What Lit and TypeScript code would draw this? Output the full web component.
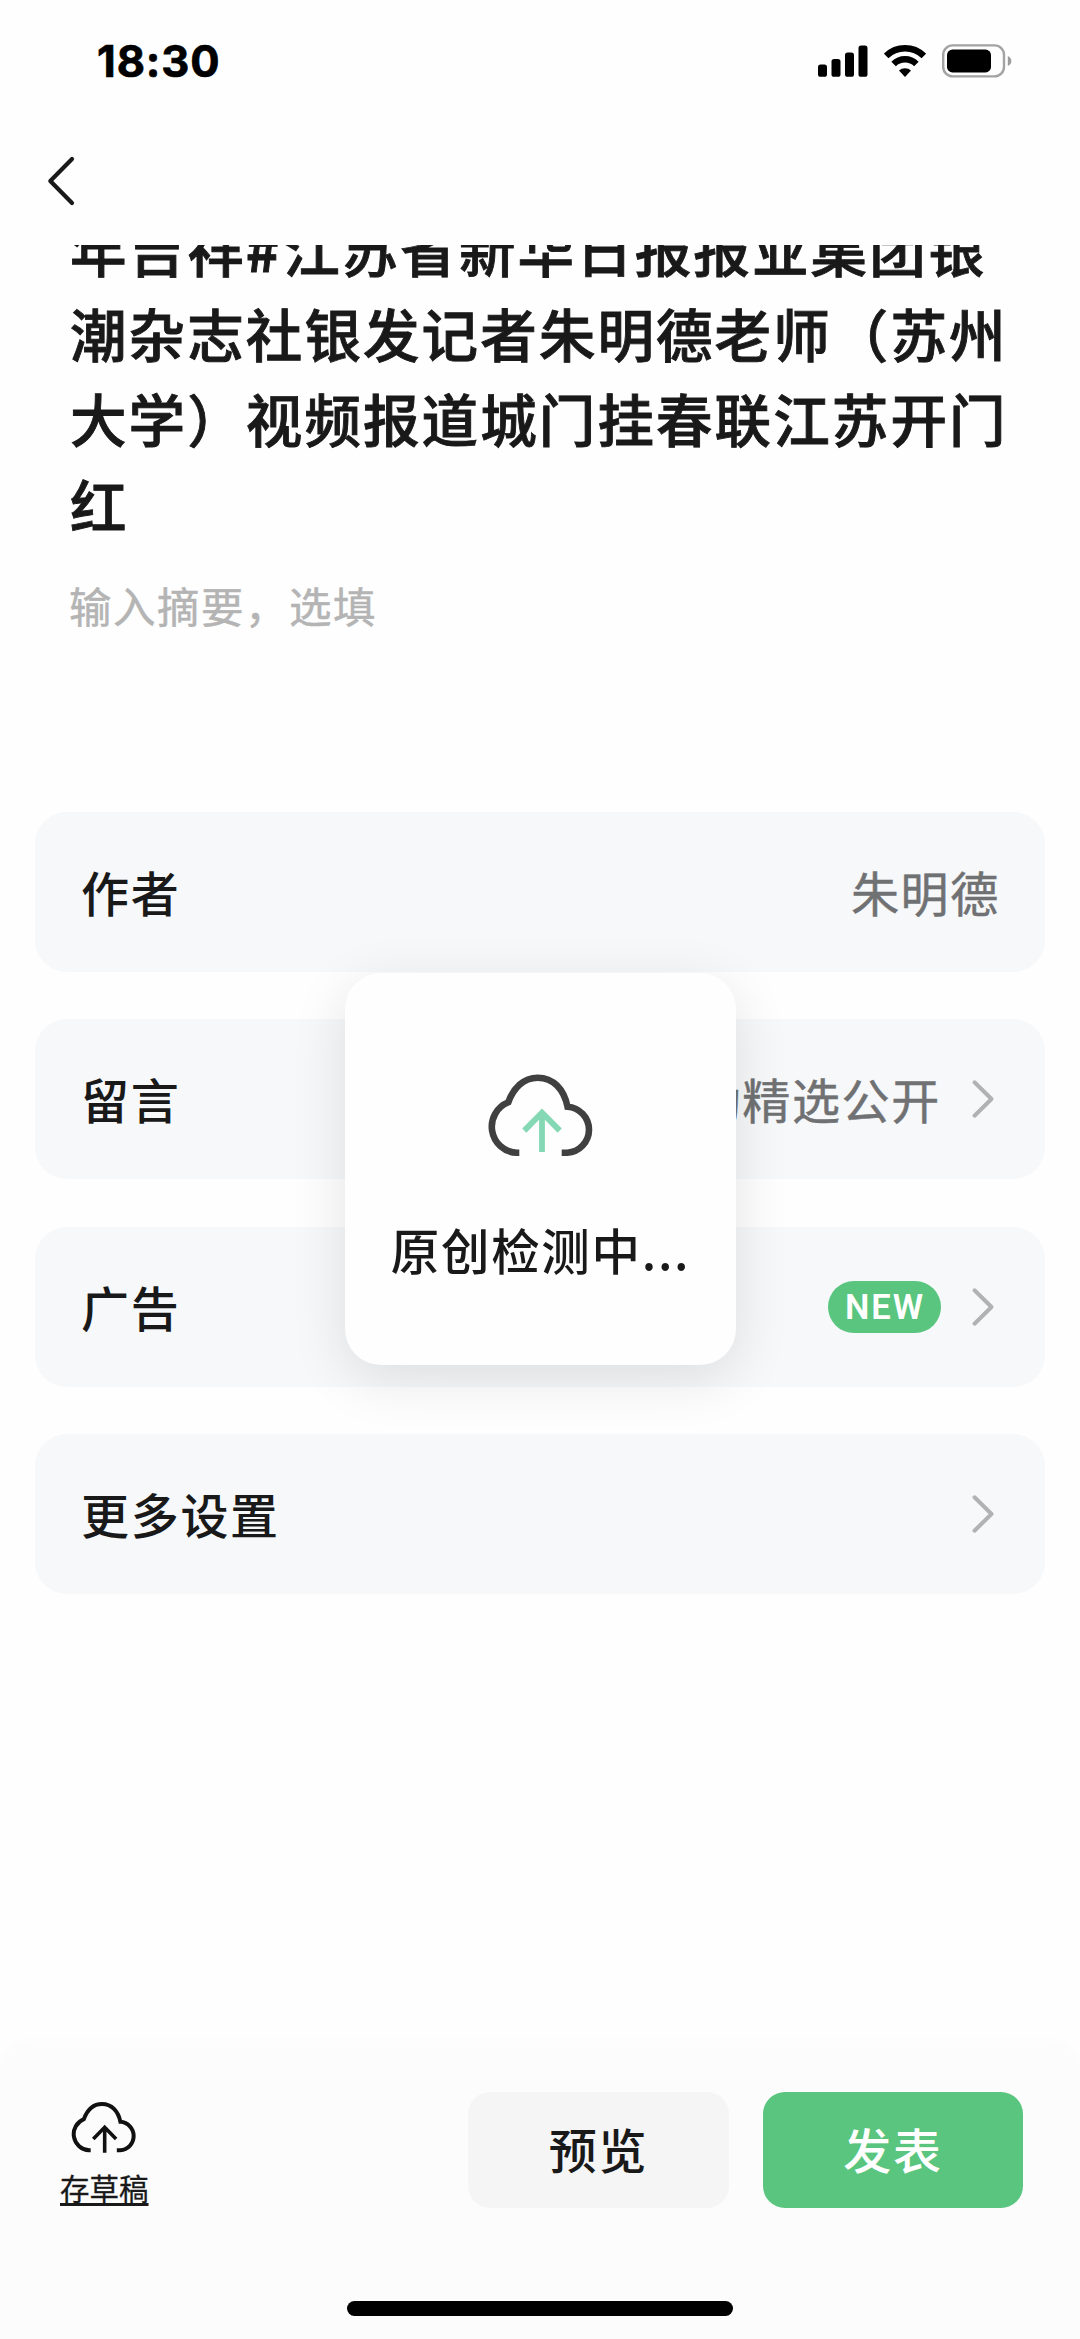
import { LitElement, html, css, svg, nothing } from "lit";
import { customElement, property } from "lit/decorators.js";

const cloudOutline = svg`<path d="M39.3 82.8H36.7A26.2 26.2 0 0 1 28.3 32.3C33.3 18.3 43.3 7.7 57.7 7.7C73.3 7.7 84 19.3 87.5 36.7A23.1 23.1 0 0 1 87.3 82.8H81.7"/>`;

@customElement("status-bar")
class StatusBar extends LitElement {
  static styles = css`
    :host { display: block; }
    .bar {
      display: flex; justify-content: space-between; align-items: center;
      height: 122px; padding: 0 68px 0 97px; box-sizing: border-box;
      color: #000;
    }
    .time { font: 700 43.5px/50px Inter, sans-serif; letter-spacing: 0.9px; -webkit-text-stroke: 0.7px #000; }
    .icons { display: flex; align-items: center; gap: 16px; }
    svg { display: block; }
  `;
  render() {
    return html`
      <div class="bar">
        <div class="time">18:30</div>
        <div class="icons">
          <svg width="50" height="34" viewBox="0 0 50 34">
            <rect x="0" y="20.5" width="9" height="12.3" rx="2.6"/>
            <rect x="13.5" y="15" width="9" height="17.8" rx="2.6"/>
            <rect x="27" y="8.5" width="9" height="24.3" rx="2.6"/>
            <rect x="40.5" y="1.5" width="9" height="31.3" rx="2.6"/>
          </svg>
          <svg width="42" height="34" viewBox="0 0 42 34">
            <g fill="none" stroke="#000" stroke-width="6.4">
              <path d="M2.2 11.9A27 27 0 0 1 39.8 11.9"/>
              <path d="M9.6 20A16.2 16.2 0 0 1 32.4 20"/>
            </g>
            <path d="M15 26.6A8.8 8.8 0 0 1 27 26.6L21 32.9Z"/>
          </svg>
          <svg width="70" height="34" viewBox="0 0 70 34">
            <rect x="1.2" y="1.4" width="60.8" height="31" rx="9.5" fill="none" stroke="#a3a3a3" stroke-width="2.4"/>
            <rect x="5" y="5.6" width="44" height="22.8" rx="5.5"/>
            <path d="M65.8 12V22C68.4 21 69.3 19 69.3 17S68.4 13 65.8 12Z" fill="#9c9c9c"/>
          </svg>
        </div>
      </div>
    `;
  }
}

@customElement("setting-row")
class SettingRow extends LitElement {
  @property() label = "";
  @property() value = "";
  @property() badge = "";
  @property({ type: Boolean }) arrow = false;

  static styles = css`
    :host { display: block; }
    .row {
      display: flex; align-items: center; justify-content: space-between;
      height: 160px; padding: 0 45px 0 46px; box-sizing: border-box;
      background: #f6f8fa; border-radius: 32px;
      font-size: 48px; line-height: 70px; letter-spacing: 1.7px;
    }
    .label { color: #191919; font-weight: 500; padding-bottom: 2px; }
    .end { display: flex; align-items: center; gap: 30px; }
    .value { color: #707173; -webkit-text-stroke: 0.5px #707173; padding-bottom: 2px; }
    .badge {
      width: 113px; height: 52px; border-radius: 26px; background: #5ac57e; color: #fff;
      font: 600 34.5px/53px Roboto, sans-serif; letter-spacing: 2px; text-align: center; text-indent: 1px;
    }
    .arrow { display: block; margin-right: 5px; }
  `;
  render() {
    return html`
      <div class="row">
        <span class="label">${this.label}</span>
        <span class="end">
          ${this.value ? html`<span class="value">${this.value}</span>` : nothing}
          ${this.badge ? html`<span class="badge">${this.badge}</span>` : nothing}
          ${this.arrow
            ? html`<svg class="arrow" width="24" height="40" viewBox="0 0 24 40" fill="none" stroke="#b1b2b3"
                stroke-width="4" stroke-linecap="round" stroke-linejoin="round"><path d="M3.5 3.3L20.5 20L3.5 36.7"/></svg>`
            : nothing}
        </span>
      </div>
    `;
  }
}

@customElement("app-root")
class AppRoot extends LitElement {
  static styles = css`
    :host {
      display: block; height: 2339px; width: 1080px; overflow: hidden; position: relative;
      background: #fefefe; color: #191919;
      font-family: "Noto Sans CJK SC", sans-serif;
    }
    .page { display: flex; flex-direction: column; height: 100%; }
    .nav { display: flex; align-items: center; height: 123px; padding-left: 46px; }
    .nav svg { display: block; margin-bottom: 5px; }
    .content { flex: 1; overflow: hidden; }
    .title {
      margin: -40px 0 0; padding-left: 70px; white-space: nowrap;
      font-size: 56.5px; font-weight: 500; line-height: 85.2px; letter-spacing: 2.1px;
      -webkit-text-stroke: 0.9px #191919;
    }
    .title div { height: 85.2px; }
    .hash { font-weight: 700; letter-spacing: 4px; }
    .summary {
      padding: 27px 0 0 69px; color: #b4b4b4;
      font-size: 42.5px; line-height: 64px; letter-spacing: 1.5px;
      -webkit-text-stroke: 0.5px #b4b4b4;
    }
    .list { display: flex; flex-direction: column; gap: 47.4px; padding: 175px 35px 0; }
    .footer {
      display: flex; flex-direction: column; justify-content: space-between; align-items: center;
      height: 296px; background: #fcfcfc; border-radius: 30px 30px 0 0;
      box-shadow: 0 0 14px rgba(0, 0, 0, 0.02);
    }
    .actions {
      display: flex; align-items: flex-start; width: 100%; box-sizing: border-box;
      padding: 49px 57px 0 60px;
    }
    .draft { display: flex; flex-direction: column; align-items: center; padding-top: 9px; margin-right: auto; }
    .draft svg { display: block; }
    .draft span {
      margin-top: 10px; font-size: 29.5px; line-height: 44px;
      text-decoration: underline; text-decoration-thickness: 2.6px;
      text-underline-offset: 3px; text-decoration-skip-ink: none;
      -webkit-text-stroke: 0.3px #191919;
    }
    .btn {
      width: 261px; height: 116px; border-radius: 22px; background: #f5f5f5;
      font-size: 48px; font-weight: 500; line-height: 113px; letter-spacing: 1.8px; text-align: center;
    }
    .primary { margin-left: 34px; width: 260px; background: #5ac57e; color: #fff; }
    .home { width: 386px; height: 15px; border-radius: 8px; background: #000; margin-bottom: 23px; }
    .toast {
      position: absolute; left: 345px; top: 973px; width: 391px; height: 392px; box-sizing: border-box;
      display: flex; flex-direction: column; align-items: center; padding-top: 97px;
      background: #fefefe; border-radius: 36px; box-shadow: 0 14px 56px rgba(0, 0, 0, 0.11);
    }
    .toast svg { display: block; margin-left: 3px; }
    .toast span {
      margin-top: 54px; font-size: 48.5px; font-weight: 500; line-height: 70px; letter-spacing: 1.7px;
      white-space: nowrap;
    }
    .dots { letter-spacing: 1px; }
  `;

  render() {
    return html`
      <div class="page">
        <status-bar></status-bar>
        <div class="nav">
          <svg width="30" height="52" viewBox="0 0 30 52" fill="none" stroke="#191919" stroke-width="4.2"
            stroke-linecap="round" stroke-linejoin="round"><path d="M26 4L4.3 26L26 48"/></svg>
        </div>
        <div class="content">
          <div class="title">
            <div>年吉祥<span class="hash">#</span>江苏省新华日报报业集团银</div>
            <div>潮杂志社银发记者朱明德老师（苏州</div>
            <div>大学）视频报道城门挂春联江苏开门</div>
            <div>红</div>
          </div>
          <div class="summary">输入摘要，选填</div>
          <div class="list">
            <setting-row label="作者" value="朱明德"></setting-row>
            <setting-row label="留言" value="自动精选公开" arrow></setting-row>
            <setting-row label="广告" badge="NEW" arrow></setting-row>
            <setting-row label="更多设置" arrow></setting-row>
          </div>
        </div>
        <div class="footer">
          <div class="actions">
            <div class="draft">
              <svg width="66" height="54" viewBox="7.4 3 107 87.5" fill="none" stroke="#111" stroke-width="6.5">
                ${cloudOutline}
                <path d="M62 45V87M43.5 64.5L62 45.5L80.5 64.5" stroke-width="5.8"/>
              </svg>
              <span>存草稿</span>
            </div>
            <div class="btn">预览</div>
            <div class="btn primary">发表</div>
          </div>
          <div class="home"></div>
        </div>
      </div>
      <div class="toast">
        <svg width="124" height="90" viewBox="0 0 124 90" fill="none" stroke="#404040" stroke-width="6.6">
          ${cloudOutline}
          <path d="M62 43V82M44.3 60.6L62 42.6L79.7 60.6" stroke="#84d8b4" stroke-width="5.8"/>
        </svg>
        <span>原创检测中<span class="dots">...</span></span>
      </div>
    `;
  }
}
